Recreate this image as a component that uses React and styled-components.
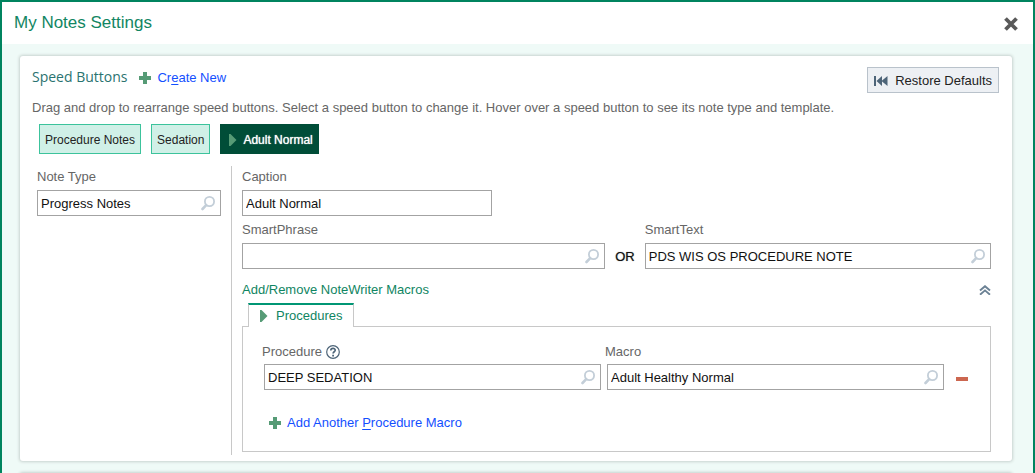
import React from "react";
import styled, { createGlobalStyle, css } from "styled-components";

const GlobalStyle = createGlobalStyle`
  *, *::before, *::after { box-sizing: border-box; }
  body { margin: 0; background: #effaf7; }
  body, button, input {
    font-family: "Liberation Sans", Arial, sans-serif;
    font-size: 13px;
    line-height: 16px;
  }
  button { margin: 0; padding: 0; border: 0; background: none; cursor: pointer; }
  svg { display: block; flex: none; }
`;

const Dialog = styled.main`
  height: 100vh;
  overflow: hidden;
  border: 2px solid #00845f;
  border-bottom: 0;
  background: #effaf7;
`;

const TitleBar = styled.header`
  display: flex;
  align-items: center;
  justify-content: space-between;
  height: 42px;
  padding: 0 15px 0 12px;
  background: #fff;
`;

const Title = styled.h1`
  margin: 0;
  font-size: 17px;
  line-height: 20px;
  font-weight: 400;
  color: #128663;
`;

const CloseButton = styled.button`
  padding-top: 2px;
`;

const Body = styled.div`
  display: flex;
  flex-direction: column;
  gap: 12px;
  padding: 12px 21px 0 18px;
`;

const Card = styled.section`
  flex: none;
  min-height: 40px;
  padding: 11px 13px 6px 12px;
  border-radius: 3px;
  background: #fff;
  box-shadow: 0 0 3px 1px #c8d2cf;
`;

const CardHeader = styled.div`
  display: flex;
  align-items: flex-start;
  justify-content: space-between;
`;

const HeadingGroup = styled.div`
  display: flex;
  align-items: center;
  gap: 12px;
`;

const Heading = styled.h2`
  margin: 0;
  font-family: "Open Sans", "Noto Sans", sans-serif;
  font-size: 14px;
  line-height: 20px;
  font-weight: 400;
  color: #2a7370;
`;

const LinkButton = styled.button`
  display: inline-flex;
  align-items: center;
  gap: 6px;
  padding-top: 2px;
  color: #134fff;
  u { text-underline-offset: 2px; }
`;

const RestoreButton = styled.button`
  display: flex;
  align-items: center;
  gap: 7px;
  height: 26px;
  padding: 1px 6px 0;
  border: 1px solid #b9c2cb;
  background: #edf0f4;
  color: #222;
`;

const Hint = styled.p`
  margin: 7px 0 8px;
  color: #666;
`;

const ChipRow = styled.div`
  display: flex;
  gap: 10px;
  padding-left: 7px;
`;

const Chip = styled.button`
  display: flex;
  align-items: center;
  gap: 6px;
  height: 30px;
  padding: 1px 5px 0;
  border: 1px solid #3cc39c;
  background: #d0f0e7;
  color: #222;
  font-size: 12px;
  ${(p) => p.$selected && css`
    padding-left: 8px;
    border-color: #004d38;
    background: #004d38;
    color: #fff;
    text-shadow: 0 0 1px #fff;
  `}
`;

const Columns = styled.div`
  display: grid;
  grid-template-columns: 199px minmax(0, 1fr);
  margin-top: 12px;
`;

const SideColumn = styled.div`
  padding: 3px 10px 0 5px;
`;

const MainColumn = styled.div`
  display: flex;
  flex-direction: column;
  padding: 3px 8px 3px 10px;
  border-left: 1px solid #c8c8c8;
`;

const Field = styled.div`
  display: flex;
  flex-direction: column;
  gap: 5px;
  flex: ${(p) => p.$grow || "none"};
  max-width: ${(p) => p.$max || "none"};
  min-width: 0;
`;

const LabelLine = styled.div`
  display: flex;
  align-items: center;
  gap: 4px;
  height: 16px;
  color: #666;
`;

const Box = styled.div`
  display: flex;
  align-items: center;
  height: 26px;
  padding: 0 5px 0 3px;
  border: 1px solid #a3a3a3;
  background: #fff;
`;

const TextInput = styled.input`
  flex: 1;
  min-width: 0;
  padding: 2px 0 0;
  border: 0;
  outline: 0;
  background: transparent;
  color: #111;
`;

const PhraseRow = styled.div`
  display: flex;
  align-items: flex-end;
  gap: 10px;
  margin-top: 6px;
`;

const Or = styled.span`
  padding-bottom: 4px;
  color: #111;
  text-shadow: 0 0 1px #777;
`;

const MacroHeader = styled.div`
  display: flex;
  align-items: center;
  justify-content: space-between;
  margin-top: 13px;
`;

const MacroTitle = styled.h3`
  margin: 0;
  font-size: 13px;
  font-weight: 400;
  color: #0f8562;
`;

const TabList = styled.div`
  display: flex;
  margin: 5px 0 -1px 6px;
`;

const Tab = styled.button`
  display: flex;
  align-items: center;
  gap: 8px;
  height: 24px;
  padding: 0 11px;
  border: 1px solid #c8c8c8;
  border-top: 2px solid #009674;
  border-bottom: 0;
  background: #fff;
  color: #0f8562;
  z-index: 1;
`;

const TabPanel = styled.div`
  padding: 17px 22px 20px 19px;
  border: 1px solid #c8c8c8;
`;

const MacroRow = styled.div`
  display: flex;
  align-items: flex-end;
  gap: 4px;
`;

const MacroField = styled(Field)`
  flex: 1;
  gap: 4px;
  ${Box} { margin-left: 2px; }
`;

const RemoveButton = styled.button`
  margin: 0 0 9px 8px;
`;

const AddRow = styled.div`
  display: flex;
  padding: 23px 0 0 7px;
`;

const PlusIcon = () => (
  <svg width="12" height="12" viewBox="0 0 12 12" aria-hidden="true">
    <path d="M4 0h4v4h4v4H8v4H4V8H0V4h4z" fill="#569b76" />
  </svg>
);

const ArrowIcon = () => (
  <svg width="8" height="12" viewBox="0 0 8 12" aria-hidden="true">
    <path d="M0 0h1.500L7.500 6l-6 6H0z" fill="#569b76" />
  </svg>
);

const SearchIcon = () => (
  <svg width="14" height="16" viewBox="0 0 14 16" fill="none" stroke="#c3ced8" aria-hidden="true">
    <circle cx="8.500" cy="6.500" r="4.600" strokeWidth="1.800" />
    <path d="M5.200 10.200L1.500 14" strokeWidth="2.600" strokeLinecap="round" />
  </svg>
);

const CloseIcon = () => (
  <svg width="14" height="14" viewBox="0 0 14 14" stroke="#595959" strokeWidth="3.800" aria-hidden="true">
    <path d="M1.500 1.500l11 11M12.500 1.500l-11 11" />
  </svg>
);

const RewindIcon = () => (
  <svg width="14" height="10" viewBox="0 0 14 10" fill="#4d6478" aria-hidden="true">
    <path d="M0 0h2v10H0zM8 0v10L2.500 5zM13.500 0v10L7.500 5z" />
  </svg>
);

const CollapseIcon = () => (
  <svg width="12" height="10" viewBox="0 0 12 10" fill="none" stroke="#6b8194" strokeWidth="1.900" aria-hidden="true">
    <path d="M1 5.500l5-4.300 5 4.300M1 9.700l5-4.300 5 4.300" />
  </svg>
);

const HelpIcon = () => (
  <svg width="14" height="14" viewBox="0 0 14 14" fill="none" stroke="#4d6478" aria-hidden="true">
    <circle cx="7" cy="7" r="6.300" strokeWidth="1.200" />
    <path d="M4.800 5.500C4.800 2.600 9.300 2.700 9.200 5.300C9.100 6.800 7.100 6.800 7.100 8.600" strokeWidth="1.700" />
    <path d="M7.100 9.700v1.700" strokeWidth="1.800" />
  </svg>
);

const MinusIcon = () => (
  <svg width="12" height="4" viewBox="0 0 12 4" aria-hidden="true">
    <path d="M0 0h12v4H0z" fill="#cc6750" />
  </svg>
);

function TextBox({ id, value, lookup }) {
  return (
    <Box>
      <TextInput id={id} type="text" defaultValue={value} />
      {lookup && (
        <button type="button" aria-label="Search">
          <SearchIcon />
        </button>
      )}
    </Box>
  );
}

function LabeledField({ as: Wrapper = Field, id, label, value, lookup, help, grow, max }) {
  return (
    <Wrapper $grow={grow} $max={max}>
      <LabelLine>
        <label htmlFor={id}>{label}</label>
        {help && (
          <button type="button" aria-label="Help">
            <HelpIcon />
          </button>
        )}
      </LabelLine>
      <TextBox id={id} value={value} lookup={lookup} />
    </Wrapper>
  );
}

export default function App() {
  return (
    <>
      <GlobalStyle />
      <Dialog>
        <TitleBar>
          <Title>My Notes Settings</Title>
          <CloseButton type="button" aria-label="Close">
            <CloseIcon />
          </CloseButton>
        </TitleBar>
        <Body>
          <Card>
            <CardHeader>
              <HeadingGroup>
                <Heading>Speed Buttons</Heading>
                <LinkButton type="button">
                  <PlusIcon />
                  <span>Cr<u>e</u>ate New</span>
                </LinkButton>
              </HeadingGroup>
              <RestoreButton type="button">
                <RewindIcon />
                Restore Defaults
              </RestoreButton>
            </CardHeader>
            <Hint>
              Drag and drop to rearrange speed buttons. Select a speed button to change it. Hover over a speed button to see its note type and template.
            </Hint>
            <ChipRow>
              <Chip type="button">Procedure Notes</Chip>
              <Chip type="button">Sedation</Chip>
              <Chip type="button" $selected>
                <ArrowIcon />
                Adult Normal
              </Chip>
            </ChipRow>
            <Columns>
              <SideColumn>
                <LabeledField id="note-type" label="Note Type" value="Progress Notes" lookup />
              </SideColumn>
              <MainColumn>
                <LabeledField id="caption" label="Caption" value="Adult Normal" max="250px" />
                <PhraseRow>
                  <LabeledField id="smart-phrase" label="SmartPhrase" value="" lookup grow="363 1 0" />
                  <Or>OR</Or>
                  <LabeledField id="smart-text" label="SmartText" value="PDS WIS OS PROCEDURE NOTE" lookup grow="346 1 0" />
                </PhraseRow>
                <MacroHeader>
                  <MacroTitle>Add/Remove NoteWriter Macros</MacroTitle>
                  <button type="button" aria-label="Collapse">
                    <CollapseIcon />
                  </button>
                </MacroHeader>
                <TabList role="tablist">
                  <Tab type="button" role="tab" aria-selected="true">
                    <ArrowIcon />
                    Procedures
                  </Tab>
                </TabList>
                <TabPanel role="tabpanel">
                  <MacroRow>
                    <LabeledField as={MacroField} id="procedure" label="Procedure" value="DEEP SEDATION" lookup help />
                    <LabeledField as={MacroField} id="macro" label="Macro" value="Adult Healthy Normal" lookup />
                    <RemoveButton type="button" aria-label="Remove">
                      <MinusIcon />
                    </RemoveButton>
                  </MacroRow>
                  <AddRow>
                    <LinkButton type="button">
                      <PlusIcon />
                      <span>Add Another <u>P</u>rocedure Macro</span>
                    </LinkButton>
                  </AddRow>
                </TabPanel>
              </MainColumn>
            </Columns>
          </Card>
          <Card />
        </Body>
      </Dialog>
    </>
  );
}
